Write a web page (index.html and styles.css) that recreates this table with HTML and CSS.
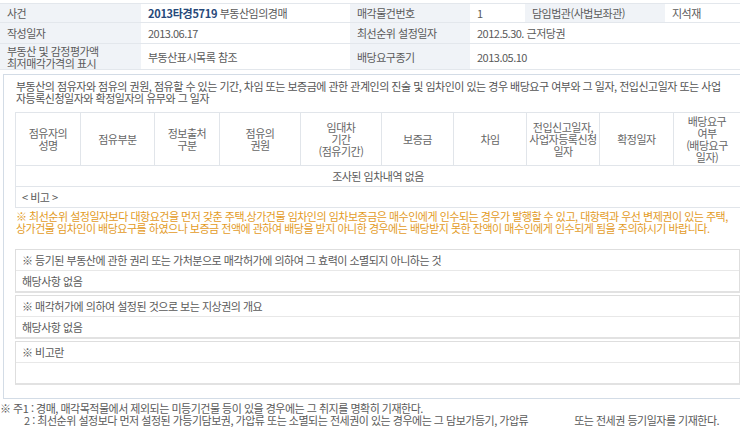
FILE: index.html
```html
<!DOCTYPE html>
<html lang="ko">
<head>
<meta charset="utf-8">
<link rel="stylesheet" href="styles.css">
</head>
<body>
<div class="page">
  <table class="info">
    <colgroup>
      <col class="ic1"><col class="ic2"><col class="ic3"><col class="ic4"><col class="ic5"><col class="ic6">
    </colgroup>
    <tr class="r1">
      <th>사건</th>
      <td><b class="case">2013타경5719</b> 부동산임의경매</td>
      <th>매각물건번호</th>
      <td>1</td>
      <th>담임법관(사법보좌관)</th>
      <td>지석재</td>
    </tr>
    <tr class="r2">
      <th>작성일자</th>
      <td>2013.06.17</td>
      <th>최선순위 설정일자</th>
      <td colspan="3">2012.5.30. 근저당권</td>
    </tr>
    <tr class="r3">
      <th>부동산 및 감정평가액<br>최저매각가격의 표시</th>
      <td>부동산표시목록 참조</td>
      <th>배당요구종기</th>
      <td colspan="3">2013.05.10</td>
    </tr>
  </table>

  <div class="box">
    <p class="intro">부동산의 점유자와 점유의 권원, 점유할 수 있는 기간, 차임 또는 보증금에 관한 관계인의 진술 및 임차인이 있는 경우 배당요구 여부와 그 일자, 전입신고일자 또는 사업<br>자등록신청일자와 확정일자의 유무와 그 일자</p>

    <table class="rent">
      <colgroup>
        <col class="rc1"><col class="rc2"><col class="rc3"><col class="rc4"><col class="rc5">
        <col class="rc6"><col class="rc7"><col class="rc8"><col class="rc9"><col class="rc10">
      </colgroup>
      <tr class="head">
        <th>점유자의<br>성명</th>
        <th>점유부분</th>
        <th>정보출처<br>구분</th>
        <th>점유의<br>권원</th>
        <th>임대차<br>기간<br>(점유기간)</th>
        <th>보증금</th>
        <th>차임</th>
        <th>전입신고일자,<br>사업자등록신청<br>일자</th>
        <th>확정일자</th>
        <th>배당요구<br>여부<br>(배당요구<br>일자)</th>
      </tr>
      <tr class="row">
        <td colspan="10" class="center">조사된 임차내역 없음</td>
      </tr>
      <tr class="row">
        <td colspan="10">&lt; 비고 &gt;</td>
      </tr>
    </table>

    <p class="note">※ 최선순위 설정일자보다 대항요건을 먼저 갖춘 주택.상가건물 임차인의 임차보증금은 매수인에게 인수되는 경우가 발행할 수 있고, 대항력과 우선 변제권이 있는 주택,<br>상가건물 임차인이 배당요구를 하였으나 보증금 전액에 관하여 배당을 받지 아니한 경우에는 배당받지 못한 잔액이 매수인에게 인수되게 됨을 주의하시기 바랍니다.</p>

    <div class="sub first">
      <div class="sub-h">※ 등기된 부동산에 관한 권리 또는 가처분으로 매각허가에 의하여 그 효력이 소멸되지 아니하는 것</div>
      <div class="sub-b">해당사항 없음</div>
    </div>
    <div class="sub">
      <div class="sub-h">※ 매각허가에 의하여 설정된 것으로 보는 지상권의 개요</div>
      <div class="sub-b">해당사항 없음</div>
    </div>
    <div class="sub">
      <div class="sub-h">※ 비고란</div>
      <div class="sub-b"></div>
    </div>
  </div>

  <div class="foot">
    <p class="f1">※ 주1 : 경매, 매각목적물에서 제외되는 미등기건물 등이 있을 경우에는 그 취지를 명확히 기재한다.</p>
    <p class="f2">2 : 최선순위 설정보다 먼저 설정된 가등기담보권, 가압류 또는 소멸되는 전세권이 있는 경우에는 그 담보가등기, 가압류<span class="gap"></span>또는 전세권 등기일자를 기재한다.</p>
  </div>
</div>
</body>
</html>
```

FILE: styles.css
```css
html, body {
  margin: 0;
  padding: 0;
  background: #fff;
}
body {
  width: 740px;
  height: 436px;
  overflow: hidden;
  font-family: "Noto Sans CJK KR", "Noto Sans", sans-serif;
  font-size: 11px;
  letter-spacing: -0.5px;
  color: #5a5a5a;
}
p { margin: 0; }

.page {
  width: 760px;
  padding-top: 3px;
}

/* top info table */
.info {
  width: 760px;
  border-collapse: collapse;
  table-layout: fixed;
}
.ic1 { width: 141px; }
.ic2 { width: 209px; }
.ic3 { width: 120px; }
.ic4 { width: 55px; }
.ic5 { width: 140px; }
.ic6 { width: 95px; }
.info th, .info td {
  border-top: 1px solid #e3e7ec;
  border-bottom: 1px solid #e3e7ec;
  padding: 0 7px;
  text-align: left;
  font-weight: normal;
  line-height: 12px;
  white-space: nowrap;
}
.info th { background: #f0f3f7; color: #5a5a5a; }
.info td { background: #fff; color: #5a5a5a; }
.info .r1 th, .info .r1 td { height: 18px; }
.info .r2 th, .info .r2 td { height: 20px; }
.info .r3 th, .info .r3 td { height: 25px; }
.case { color: #27497a; font-weight: bold; letter-spacing: -0.3px; }

/* outer box */
.box {
  margin: 4px 0 0 3px;
  width: 725px;
  border: 1px solid #d3dce6;
  padding: 5px 11px 13px 11px;
}
.intro {
  line-height: 12px;
  margin: 0 0 8px 1px;
  color: #555;
  white-space: nowrap;
}

/* occupancy table */
.rent {
  width: 725px;
  border-collapse: collapse;
  table-layout: fixed;
}
.rc1 { width: 65px; }
.rc2 { width: 74px; }
.rc3 { width: 65px; }
.rc4 { width: 81px; }
.rc5 { width: 81px; }
.rc6 { width: 72px; }
.rc7 { width: 73px; }
.rc8 { width: 73px; }
.rc9 { width: 74px; }
.rc10 { width: 67px; }
.rent th {
  border: 1px solid #e1e5ea;
  font-weight: normal;
  color: #666;
  line-height: 12px;
  height: 52px;
  padding: 0;
  text-align: center;
  white-space: nowrap;
}
.rent td {
  border: 1px solid #e1e5ea;
  height: 20px;
  padding: 0 6px;
  line-height: 12px;
  color: #5a5a5a;
}
.rent td.center { text-align: center; }

.note {
  margin: 2px 0 0 1px;
  line-height: 12px;
  color: #e39b1f;
  white-space: nowrap;
}

/* sub boxes */
.sub {
  border: 1px solid #dedede;
  border-bottom: 2px solid #e2e2e2;
  margin-top: 2px;
}
.sub.first { margin-top: 15px; }
.sub-h, .sub-b {
  height: 20px;
  line-height: 20px;
  padding-left: 6px;
  white-space: nowrap;
}
.sub-h { border-bottom: 1px solid #e8e8e8; }

/* footer notes */
.foot {
  margin-top: 3px;
  line-height: 12px;
  color: #5a5a5a;
  white-space: nowrap;
}
.f2 { padding-left: 24px; }
.gap { display: inline-block; width: 46px; }
```
